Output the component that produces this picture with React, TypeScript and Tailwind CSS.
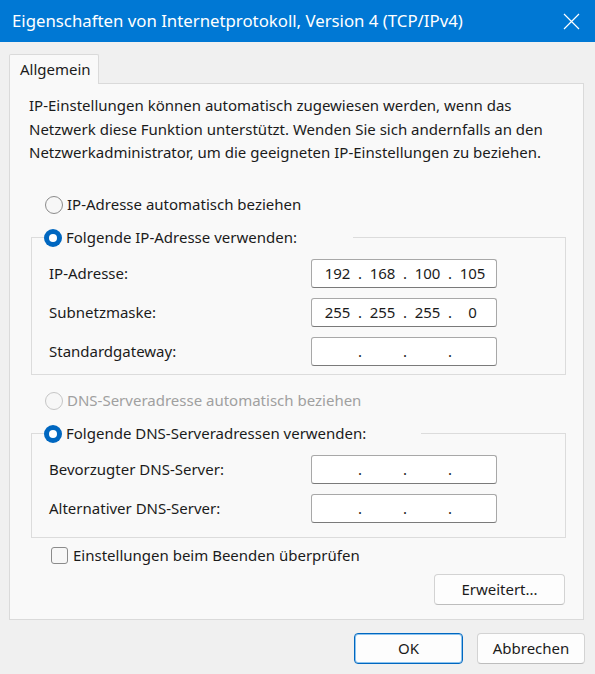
import { useState } from "react";

type Octets = [string, string, string, string];

function Radio({ checked, disabled }: { checked?: boolean; disabled?: boolean }) {
  if (checked) {
    return (
      <span className="flex h-[18px] w-[18px] shrink-0 items-center justify-center rounded-full bg-[#0067c0]">
        <span className="h-[8px] w-[8px] rounded-full bg-white" />
      </span>
    );
  }
  return (
    <span
      className={
        "h-[18px] w-[18px] shrink-0 rounded-full border bg-[#f7f7f7] " +
        (disabled ? "border-[#c6c6c6]" : "border-[#8b8b8b]")
      }
    />
  );
}

function IpField({ value }: { value: Octets }) {
  return (
    <div className="flex h-[29px] w-[186px] items-center rounded-[3px] border border-[#a8a8a8] border-b-[#7a7a7a] bg-white pl-[7px]">
      {value.map((octet, i) => (
        <div key={i} className="flex items-center">
          <span className="w-[37px] text-center">{octet}</span>
          {i < 3 && <span className="w-[8px] text-center">.</span>}
        </div>
      ))}
    </div>
  );
}

function FieldRow({ label, value }: { label: string; value: Octets }) {
  return (
    <div className="flex items-center justify-between pr-[68px]">
      <span>{label}</span>
      <IpField value={value} />
    </div>
  );
}

function Button({ children, primary }: { children: React.ReactNode; primary?: boolean }) {
  return (
    <button
      type="button"
      className={
        "h-[31px] rounded-[4px] border bg-[#fdfdfd] text-[15px] text-[#1b1b1b] " +
        (primary ? "border-[#0067c0] shadow-[inset_0_0_0_1px_#8cc3ee]" : "border-[#d3d3d3] border-b-[#bdbdbd]")
      }
    >
      {children}
    </button>
  );
}

export default function App() {
  const [checked, setChecked] = useState(false);
  const empty: Octets = ["", "", "", ""];

  return (
    <div
      className="flex h-[674px] w-[595px] flex-col bg-[#f0f0f0] text-[15px] text-[#1b1b1b]"
      style={{ fontFamily: '"Noto Sans", "Open Sans", sans-serif' }}
    >
      <div className="flex h-[42px] shrink-0 items-center justify-between bg-[#0078d4] pl-[12px] pr-[15px] text-white">
        <span className="text-[16.8px]">Eigenschaften von Internetprotokoll, Version 4 (TCP/IPv4)</span>
        <svg width="17" height="17" viewBox="0 0 17 17" fill="none" stroke="white" strokeWidth="1.2">
          <path d="M1 1L16 16M16 1L1 16" />
        </svg>
      </div>

      <div className="flex flex-col px-[9px] pt-[12px]">
        <div className="relative z-10 -mb-px flex h-[30px] w-[90px] items-center rounded-t-[2px] border border-b-0 border-[#dadada] bg-[#f9f9f9] pl-[10px]">
          Allgemein
        </div>
        <div className="flex h-[537px] w-[575px] flex-col border border-[#dadada] bg-[#f9f9f9] pl-[21px] pr-[17px] pt-[10px]">
          <p className="-ml-[2px] leading-[23.5px]">
            IP-Einstellungen können automatisch zugewiesen werden, wenn das Netzwerk diese Funktion unterstützt. Wenden Sie sich andernfalls an den Netzwerkadministrator, um die geeigneten IP-Einstellungen zu beziehen.
          </p>

          <label className="mt-[28px] flex h-[24px] items-center gap-[4px] pl-[14px]">
            <Radio />
            <span>IP-Adresse automatisch beziehen</span>
          </label>

          <fieldset className="mt-[9px] flex flex-col gap-[10px] border border-[#dcdcdc] pb-[8px] pl-[17px] pt-[9px]">
            <legend className="-ml-[5px] pr-[56px]">
              <span className="flex h-[24px] items-center gap-[4px]">
                <Radio checked />
                <span>Folgende IP-Adresse verwenden:</span>
              </span>
            </legend>
            <FieldRow label="IP-Adresse:" value={["192", "168", "100", "105"]} />
            <FieldRow label="Subnetzmaske:" value={["255", "255", "255", "0"]} />
            <FieldRow label="Standardgateway:" value={empty} />
          </fieldset>

          <label className="mt-[14px] flex h-[24px] items-center gap-[4px] pl-[14px] text-[#a0a0a0]">
            <Radio disabled />
            <span>DNS-Serveradresse automatisch beziehen</span>
          </label>

          <fieldset className="mt-[9px] flex flex-col gap-[10px] border border-[#dcdcdc] pb-[14px] pl-[17px] pt-[9px]">
            <legend className="-ml-[5px] pr-[55px]">
              <span className="flex h-[24px] items-center gap-[4px]">
                <Radio checked />
                <span>Folgende DNS-Serveradressen verwenden:</span>
              </span>
            </legend>
            <FieldRow label="Bevorzugter DNS-Server:" value={empty} />
            <FieldRow label="Alternativer DNS-Server:" value={empty} />
          </fieldset>

          <label
            className="mt-[6px] flex h-[24px] items-center gap-[5px] pl-[20px]"
            onClick={() => setChecked(!checked)}
          >
            <span className="h-[17px] w-[17px] rounded-[3px] border border-[#8b8b8b] bg-[#f7f7f7]" />
            <span>Einstellungen beim Beenden überprüfen</span>
          </label>

          <div className="mt-[6px] flex justify-end pr-[1px]">
            <div className="flex w-[131px] flex-col">
              <Button>Erweitert...</Button>
            </div>
          </div>
        </div>
      </div>

      <div className="flex justify-end gap-[14px] pr-[10px] pt-[13px]">
        <div className="flex w-[109px] flex-col">
          <Button primary>OK</Button>
        </div>
        <div className="flex w-[108px] flex-col">
          <Button>Abbrechen</Button>
        </div>
      </div>
    </div>
  );
}
